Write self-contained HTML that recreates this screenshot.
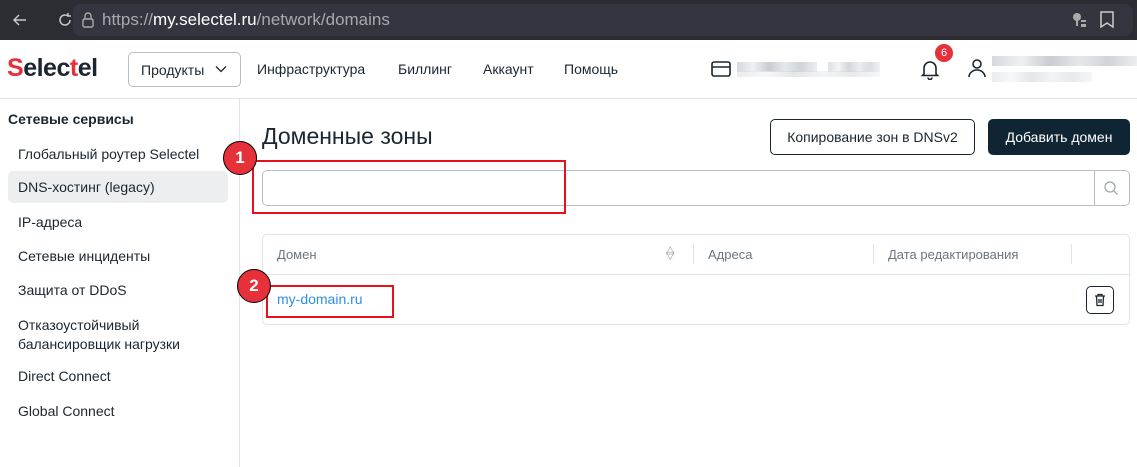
<!DOCTYPE html>
<html><head><meta charset="utf-8"><style>
*{box-sizing:border-box;margin:0;padding:0}
body{width:1137px;height:467px;overflow:hidden;background:#fff;font-family:"Liberation Sans",sans-serif;color:#1b2630;position:relative}
.abs{position:absolute}
.chrome{left:0;top:0;width:1137px;height:40px;background:#2c2c33}
.url{left:73px;top:4px;width:1060px;height:32px;background:#35353f;border-radius:8px}
.nav{top:40px;left:0;width:1137px;height:59px;border-bottom:1px solid #e1e3e6}
.side{top:99px;left:0;width:240px;height:368px;border-right:1px solid #e1e3e6}
.si{position:absolute;left:18px;font-size:14px;color:#1b2630}
.blur{background:linear-gradient(90deg,#d5d9de,#eef0f2,#c8ccd2,#e5e8eb,#d0d4d9,#eceef0);height:10px}
.badge{width:20px;height:20px;border-radius:50%;background:#e6303a;border:1.5px solid #000;color:#fff;font-weight:bold;display:flex;align-items:center;justify-content:center}
</style></head><body>
<div class="abs chrome"></div>
<div class="abs url"></div>
<svg class="abs" style="left:10px;top:10px" width="20" height="20" viewBox="0 0 20 20" fill="none" stroke="#c8c8cc" stroke-width="1.5"><path d="M16 10H4M9 5l-5 5 5 5"/></svg>
<svg class="abs" style="left:55px;top:10px" width="20" height="20" viewBox="0 0 20 20" fill="none" stroke="#c8c8cc" stroke-width="1.5"><path d="M15 10a5 5 0 1 1-2-4M13 3v3h3"/></svg>
<svg class="abs" style="left:80px;top:11px" width="16" height="18" viewBox="0 0 16 18" fill="none" stroke="#aaa" stroke-width="1.4"><rect x="3" y="8" width="10" height="8" rx="1.5"/><path d="M5 8V5a3 3 0 0 1 6 0v3"/></svg>
<div class="abs" style="left:102px;top:10px;font-size:17px;color:#a8a8b0">https://<span style="color:#fff">my.selectel.ru</span>/network/domains</div>
<svg class="abs" style="left:1071px;top:11px" width="18" height="18" viewBox="0 0 18 18" fill="#aaa"><circle cx="6" cy="6" r="4"/><rect x="5" y="8" width="2" height="7"/><rect x="10" y="9" width="5" height="2"/><rect x="10" y="13" width="5" height="3"/></svg>
<svg class="abs" style="left:1099px;top:10px" width="16" height="20" viewBox="0 0 16 20" fill="none" stroke="#ccc" stroke-width="1.5"><path d="M2 2h12v15l-6-4-6 4z"/></svg>

<div class="abs nav"></div>
<div class="abs" style="left:7px;top:54px;font-size:25px;font-weight:bold;letter-spacing:-0.5px;color:#1b2630"><span style="color:#e6303a">S</span>elec<span style="color:#e6303a">t</span>el</div>
<div class="abs" style="left:128px;top:52px;width:113px;height:35px;border:1px solid #b8bec4;border-radius:5px;font-size:14px;padding:9px 0 0 12px">Продукты</div>
<svg class="abs" style="left:215px;top:65px" width="12" height="8" viewBox="0 0 12 8" fill="none" stroke="#1b2630" stroke-width="1.3"><path d="M1 1.5l5 5 5-5"/></svg>
<div class="abs" style="left:257px;top:61px;font-size:14px">Инфраструктура</div>
<div class="abs" style="left:398px;top:61px;font-size:14px">Биллинг</div>
<div class="abs" style="left:483px;top:61px;font-size:14px">Аккаунт</div>
<div class="abs" style="left:564px;top:61px;font-size:14px">Помощь</div>
<svg class="abs" style="left:710px;top:60px" width="22" height="18" viewBox="0 0 22 18" fill="none" stroke="#1b2630" stroke-width="1.6"><rect x="2" y="2" width="18" height="14" rx="2"/><path d="M2 7h18"/></svg>
<div class="abs blur" style="left:737px;top:62px;width:80px"></div><div class="abs blur" style="left:828px;top:62px;width:52px;opacity:.8"></div>
<div class="abs blur" style="left:737px;top:71px;width:143px;height:6px;opacity:.5"></div>
<svg class="abs" style="left:919px;top:58px" width="22" height="22" viewBox="0 0 22 22" fill="none" stroke="#1b2630" stroke-width="1.6"><path d="M5 16V10a6 6 0 0 1 12 0v6l1.5 1.5h-15zM9 19.5a2 2 0 0 0 4 0"/></svg>
<div class="abs" style="left:935px;top:44px;width:18px;height:18px;border-radius:50%;background:#e6303a;color:#fff;font-size:11px;text-align:center;line-height:18px">6</div>
<svg class="abs" style="left:967px;top:58px" width="20" height="20" viewBox="0 0 20 20" fill="none" stroke="#1b2630" stroke-width="1.6"><circle cx="10" cy="6" r="4"/><path d="M2 19a8 7 0 0 1 16 0"/></svg>
<div class="abs blur" style="left:992px;top:56px;width:145px"></div>
<div class="abs blur" style="left:992px;top:72px;width:100px;height:10px;opacity:.5"></div>

<div class="abs side"></div>
<div class="abs" style="left:8px;top:111px;font-size:14px;font-weight:bold">Сетевые сервисы</div>
<div class="si" style="top:146px">Глобальный роутер Selectel</div>
<div class="abs" style="left:8px;top:171px;width:220px;height:32px;background:#eceef0;border-radius:5px"></div>
<div class="si" style="top:179px">DNS-хостинг (legacy)</div>
<div class="si" style="top:214px">IP-адреса</div>
<div class="si" style="top:248px">Сетевые инциденты</div>
<div class="si" style="top:282px">Защита от DDoS</div>
<div class="si" style="top:316px;line-height:19px">Отказоустойчивый<br>балансировщик нагрузки</div>
<div class="si" style="top:368px">Direct Connect</div>
<div class="si" style="top:403px">Global Connect</div>

<div class="abs" style="left:262px;top:123px;font-size:23px">Доменные зоны</div>
<div class="abs" style="left:770px;top:119px;width:205px;height:36px;border:1px solid #1b2630;border-radius:5px;font-size:14px;text-align:center;line-height:34px">Копирование зон в DNSv2</div>
<div class="abs" style="left:988px;top:119px;width:142px;height:36px;background:#0f2533;border-radius:5px;font-size:14px;color:#fff;text-align:center;line-height:36px">Добавить домен</div>

<div class="abs" style="left:262px;top:170px;width:868px;height:36px;border:1px solid #b8bec4;border-radius:5px"></div>
<div class="abs" style="left:1094px;top:171px;width:1px;height:34px;background:#b8bec4"></div>
<svg class="abs" style="left:1103px;top:180px" width="16" height="16" viewBox="0 0 16 16" fill="none" stroke="#9aa2aa" stroke-width="1.2"><circle cx="7" cy="7" r="5"/><path d="M11 11l3.5 3.5"/></svg>
<div class="abs" style="left:252px;top:160px;width:314px;height:54px;border:2px solid #e8101a"></div>

<div class="abs" style="left:262px;top:234px;width:868px;height:91px;border:1px solid #e1e3e6;border-radius:5px"></div>
<div class="abs" style="left:263px;top:274px;width:866px;height:1px;background:#e1e3e6"></div>
<div class="abs" style="left:277px;top:247px;font-size:13px;color:#6b7680">Домен</div>
<div class="abs" style="left:666px;top:247px;font-size:11px;color:#9aa2aa;line-height:6px">&#9651;<br>&#9661;</div>
<div class="abs" style="left:693px;top:244px;width:1px;height:20px;background:#e1e3e6"></div>
<div class="abs" style="left:708px;top:247px;font-size:13px;color:#6b7680">Адреса</div>
<div class="abs" style="left:873px;top:244px;width:1px;height:20px;background:#e1e3e6"></div>
<div class="abs" style="left:888px;top:247px;font-size:13px;color:#6b7680">Дата редактирования</div>
<div class="abs" style="left:1071px;top:244px;width:1px;height:20px;background:#e1e3e6"></div>
<div class="abs" style="left:277px;top:291px;font-size:14px;color:#2f8ee5">my-domain.ru</div>
<div class="abs" style="left:1086px;top:286px;width:28px;height:28px;border:1px solid #1b2630;border-radius:5px"></div>
<svg class="abs" style="left:1093px;top:293px" width="14" height="14" viewBox="0 0 14 14" fill="none" stroke="#1b2630" stroke-width="1.3"><path d="M2 3h10M5 3V1.5h4V3M3.5 3l.5 9.5h6l.5-9.5M6 6v4M8 6v4"/></svg>
<div class="abs" style="left:266px;top:285px;width:128px;height:33px;border:2px solid #e8101a"></div>

<div class="abs badge" style="left:223px;top:141px;width:34px;height:34px;font-size:17px">1</div>
<div class="abs badge" style="left:237px;top:269px;width:34px;height:34px;font-size:17px">2</div>
</body></html>
